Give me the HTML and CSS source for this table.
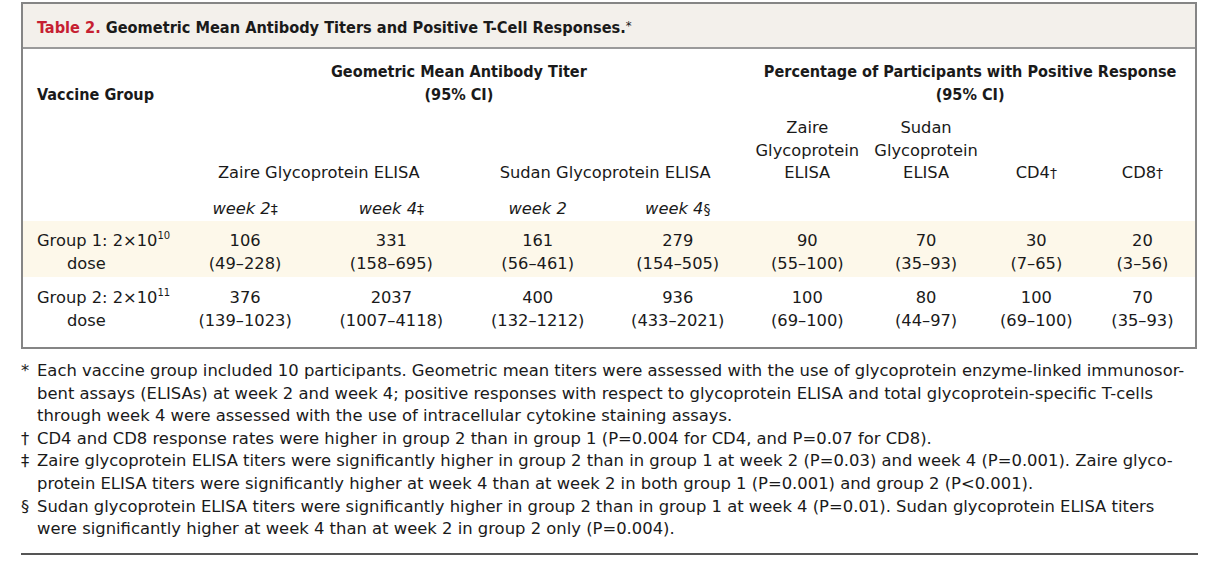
FILE: index.html
```html
<!DOCTYPE html>
<html lang="en">
<head>
<meta charset="utf-8">
<title>Table 2</title>
<link rel="stylesheet" href="styles.css">
</head>
<body>
<div class="page">
  <div class="box">
    <div class="caption"><span class="label">Table 2.</span> Geometric Mean Antibody Titers and Positive T-Cell Responses.<span class="ast">*</span></div>
    <table class="data">
      <colgroup>
        <col class="c0"><col class="c1"><col class="c2"><col class="c3"><col class="c4"><col class="c5"><col class="c6"><col class="c7"><col class="c8">
      </colgroup>
      <thead>
        <tr class="h1">
          <th class="grp">Vaccine Group</th>
          <th colspan="4" class="big">Geometric Mean Antibody Titer<br>(95% CI)</th>
          <th colspan="4" class="big">Percentage of Participants with Positive Response<br>(95% CI)</th>
        </tr>
        <tr class="h2">
          <td></td>
          <td colspan="2">Zaire Glycoprotein ELISA</td>
          <td colspan="2">Sudan Glycoprotein ELISA</td>
          <td>Zaire<br>Glycoprotein<br>ELISA</td>
          <td>Sudan<br>Glycoprotein<br>ELISA</td>
          <td>CD4<span class="mk">†</span></td>
          <td>CD8<span class="mk">†</span></td>
        </tr>
        <tr class="h3">
          <td></td>
          <td><i>week 2</i><span class="mk">‡</span></td>
          <td><i>week 4</i><span class="mk">‡</span></td>
          <td><i>week 2</i></td>
          <td><i>week 4</i><span class="mk">§</span></td>
          <td></td><td></td><td></td><td></td>
        </tr>
      </thead>
      <tbody>
        <tr class="r1">
          <td class="name">Group 1: 2×10<sup>10</sup><br><span class="dose">dose</span></td>
          <td>106<br>(49–228)</td>
          <td>331<br>(158–695)</td>
          <td>161<br>(56–461)</td>
          <td>279<br>(154–505)</td>
          <td>90<br>(55–100)</td>
          <td>70<br>(35–93)</td>
          <td>30<br>(7–65)</td>
          <td>20<br>(3–56)</td>
        </tr>
        <tr class="r2">
          <td class="name">Group 2: 2×10<sup>11</sup><br><span class="dose">dose</span></td>
          <td>376<br>(139–1023)</td>
          <td>2037<br>(1007–4118)</td>
          <td>400<br>(132–1212)</td>
          <td>936<br>(433–2021)</td>
          <td>100<br>(69–100)</td>
          <td>80<br>(44–97)</td>
          <td>100<br>(69–100)</td>
          <td>70<br>(35–93)</td>
        </tr>
      </tbody>
    </table>
  </div>
  <div class="notes">
    <p><span class="sym">*</span>Each vaccine group included 10 participants. Geometric mean titers were assessed with the use of glycoprotein enzyme-linked immunosor-<br>bent assays (ELISAs) at week 2 and week 4; positive responses with respect to glycoprotein ELISA and total glycoprotein-specific T-cells<br>through week 4 were assessed with the use of intracellular cytokine staining assays.</p>
    <p><span class="sym">†</span>CD4 and CD8 response rates were higher in group 2 than in group 1 (P=0.004 for CD4, and P=0.07 for CD8).</p>
    <p><span class="sym">‡</span>Zaire glycoprotein ELISA titers were significantly higher in group 2 than in group 1 at week 2 (P=0.03) and week 4 (P=0.001). Zaire glyco-<br>protein ELISA titers were significantly higher at week 4 than at week 2 in both group 1 (P=0.001) and group 2 (P&lt;0.001).</p>
    <p><span class="sym">§</span>Sudan glycoprotein ELISA titers were significantly higher in group 2 than in group 1 at week 4 (P=0.01). Sudan glycoprotein ELISA titers<br>were significantly higher at week 4 than at week 2 in group 2 only (P=0.004).</p>
  </div>
  <div class="rule"></div>
</div>
</body>
</html>
```

FILE: styles.css
```css
* { box-sizing: border-box; }
html, body { margin: 0; padding: 0; background: #ffffff; }
body {
  font-family: "DejaVu Sans", "Noto Sans", sans-serif;
  color: #1a1a1a;
  font-size: 16px;
}
.page {
  width: 1223px;
  padding: 2px 26px 0 21px;
}
.box {
  width: 1176px;
  border: 2px solid #858585;
}
.caption {
  background: #f3f0eb;
  border-bottom: 2px solid #9a9a9a;
  height: 45px;
  padding: 11px 0 0 14px;
  font-family: "DejaVu Sans Condensed", "DejaVu Sans", sans-serif;
  font-weight: 700;
  font-size: 16.2px;
  line-height: 22px;
  color: #1a1a1a;
  white-space: nowrap;
}
.caption .label { color: #c61f32; }
.caption .ast { font-weight: 400; vertical-align: 3px; font-size: 13px; }
table.data {
  border-collapse: collapse;
  table-layout: fixed;
  width: 1172px;
  line-height: 22.5px;
  font-size: 16.3px;
}
col.c0 { width: 149.5px; }
col.c1 { width: 145px; }
col.c2 { width: 147.5px; }
col.c3 { width: 145px; }
col.c4 { width: 135px; }
col.c5 { width: 124px; }
col.c6 { width: 113.5px; }
col.c7 { width: 107px; }
col.c8 { width: 105px; }
table.data td, table.data th {
  padding: 0;
  text-align: center;
  vertical-align: bottom;
  white-space: nowrap;
}
table.data th {
  font-family: "DejaVu Sans Condensed", "DejaVu Sans", sans-serif;
  font-weight: 700;
  font-size: 16.1px;
}
table.data .h1 th { padding-top: 12px; }
table.data .h1 th.grp { text-align: left; padding-left: 14px; }
table.data .h2 td { padding-top: 11px; }
table.data .h3 td { padding-top: 13px; padding-bottom: 1px; }
.mk { font-size: 14px; }
table.data .r1 { background: #fdf8ea; }
table.data .r1 td { padding-top: 9px; padding-bottom: 2px; }
table.data .r2 td { padding-top: 10px; padding-bottom: 15px; }
table.data td.name { text-align: left; padding-left: 14px; }
.name sup { font-size: 10px; line-height: 0; vertical-align: 7px; }
.dose { padding-left: 30px; }
.notes {
  padding: 11px 0 0 0;
  width: 1190px;
}
.notes p {
  margin: 0;
  padding-left: 16px;
  text-indent: -16px;
  line-height: 22.6px;
  font-size: 16.4px;
  white-space: nowrap;
}
.notes .sym {
  display: inline-block;
  width: 16px;
  text-indent: 0;
}
.rule {
  width: 1177px;
  height: 2px;
  background: #555555;
  margin-top: 12px;
}
```
